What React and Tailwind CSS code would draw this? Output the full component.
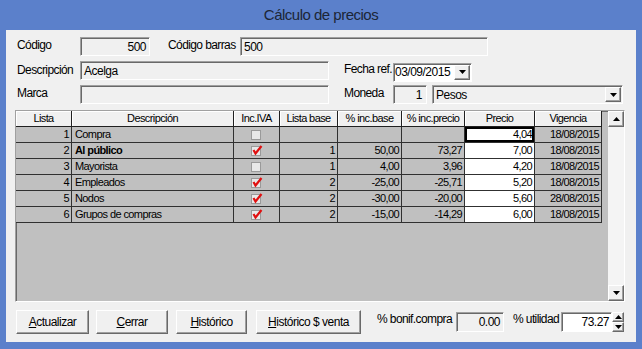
import React from 'react'

const FONT = "font-[family-name:'Liberation_Sans',Arial,sans-serif]"
const sunk = 'border border-t-[#a0a0a0] border-l-[#a0a0a0] border-b-white border-r-white shadow-[inset_1px_1px_0_#696969]'
const raised = 'border border-t-white border-l-white border-b-[#696969] border-r-[#696969] shadow-[inset_-1px_-1px_0_#a0a0a0]'

const cols = [
  { key: 'lista', label: 'Lista', w: 'w-[56px]', align: 'justify-end pr-[2px]' },
  { key: 'desc', label: 'Descripción', w: 'w-[162px]', align: 'justify-start pl-[3px]' },
  { key: 'iva', label: 'Inc.IVA', w: 'w-[46px]', align: 'justify-center' },
  { key: 'base', label: 'Lista base', w: 'w-[58px]', align: 'justify-end pr-[2px]' },
  { key: 'ib', label: '% inc.base', w: 'w-[64px]', align: 'justify-end pr-[2px]' },
  { key: 'ip', label: '% inc.precio', w: 'w-[63px]', align: 'justify-end pr-[2px]' },
  { key: 'precio', label: 'Precio', w: 'w-[70px]', align: 'justify-end pr-[2px]' },
  { key: 'vig', label: 'Vigencia', w: 'w-[67px]', align: 'justify-end pr-[2px]' },
]

const rows = [
  { lista: 1, desc: 'Compra', iva: false, base: '', ib: '', ip: '', precio: '4,04', vig: '18/08/2015' },
  { lista: 2, desc: 'Al público', bold: true, iva: true, base: '1', ib: '50,00', ip: '73,27', precio: '7,00', vig: '18/08/2015' },
  { lista: 3, desc: 'Mayorista', iva: false, base: '1', ib: '4,00', ip: '3,96', precio: '4,20', vig: '18/08/2015' },
  { lista: 4, desc: 'Empleados', iva: true, base: '2', ib: '-25,00', ip: '-25,71', precio: '5,20', vig: '18/08/2015' },
  { lista: 5, desc: 'Nodos', iva: true, base: '2', ib: '-30,00', ip: '-20,00', precio: '5,60', vig: '28/08/2015' },
  { lista: 6, desc: 'Grupos de compras', iva: true, base: '2', ib: '-15,00', ip: '-14,29', precio: '6,00', vig: '18/08/2015' },
]

function Check({ on }) {
  return (
    <svg width="12" height="11" viewBox="0 0 12 11">
      <rect x="0.5" y="1.5" width="9" height="9" fill="#e8e8e8" stroke="#9a9a9a" />
      {on && <path d="M2.5 5 L4.5 8.5 L10.5 1" fill="none" stroke="#e01010" strokeWidth="2.2" />}
    </svg>
  )
}

function Arrow({ up }) {
  return (
    <svg width="7" height="4" viewBox="0 0 7 4">
      <path d={up ? 'M0 4 L7 4 L3.5 0 Z' : 'M0 0 L7 0 L3.5 4 Z'} fill="#000" />
    </svg>
  )
}

function Label({ children, className = '' }) {
  return <div className={`text-[12px] tracking-[-0.6px] leading-none whitespace-nowrap ${className}`}>{children}</div>
}

function Button({ children, className = '' }) {
  return (
    <div className={`h-[24px] ${raised} bg-[#f0f0f0] flex items-center justify-center text-[12px] tracking-[-0.5px] whitespace-nowrap ${className}`}>
      {children}
    </div>
  )
}

const val = 'text-[12px] tracking-[-0.5px] whitespace-nowrap'

export default function App() {
  return (
    <div className={`w-[642px] h-[349px] bg-[#5b80cb] flex flex-col text-black ${FONT}`}>
      <div className="h-[30px] flex items-center justify-center text-[15px] tracking-[-0.5px] text-[#1c2636]">Cálculo de precios</div>

      <div className="mx-[6px] h-[312px] bg-[#f0f0f0] pl-[9px] pt-[7px]">
        {/* header fields */}
        <div className="pl-[2px] flex items-center h-[19px]">
          <Label className="w-[63px] -mt-[3px]">Código</Label>
          <div className={`w-[70px] h-full ${sunk} flex items-center justify-end pr-[3px] ${val}`}>500</div>
          <Label className="ml-[18px] w-[72px] -mt-[4px]">Código barras</Label>
          <div className={`w-[248px] h-full ${sunk} flex items-center pl-[3px] ${val}`}>500</div>
        </div>

        <div className="pl-[2px] flex items-center h-[19px] mt-[5px]">
          <Label className="w-[63px] -mt-[2px]">Descripción</Label>
          <div className={`w-[249px] h-full ${sunk} flex items-center pl-[3px] ${val}`}>Acelga</div>
          <Label className="ml-[15px] w-[49px] -mt-[3px]">Fecha ref.</Label>
          <div className={`w-[79px] h-[19px] mt-[3px] ${sunk} bg-white flex items-center ${val}`}>
            <span className="flex-1 pl-[1px]">03/09/2015</span>
            <div className={`w-[16px] h-[15px] mr-[1px] ${raised} bg-[#f0f0f0] flex items-center justify-center`}>
              <Arrow />
            </div>
          </div>
        </div>

        <div className="pl-[2px] flex items-center h-[19px] mt-[5px]">
          <Label className="w-[63px] -mt-[3px]">Marca</Label>
          <div className={`w-[249px] h-full ${sunk}`} />
          <Label className="ml-[15px] w-[49px] -mt-[3px]">Moneda</Label>
          <div className={`w-[34px] h-full ${sunk} flex items-center justify-end pr-[4px] ${val}`}>1</div>
          <div className={`ml-[5px] w-[191px] h-full ${sunk} flex items-center ${val}`}>
            <span className="flex-1 pl-[3px]">Pesos</span>
            <div className={`w-[16px] h-[15px] mr-[1px] ${raised} bg-[#f0f0f0] flex items-center justify-center`}>
              <Arrow />
            </div>
          </div>
        </div>

        {/* grid */}
        <div className={`mt-[6px] w-[610px] h-[192px] ${sunk} bg-[#c0c0c0] flex`}>
          <div className="w-[586px] flex flex-col text-[11px] tracking-[-0.6px] whitespace-nowrap">
            <div className="flex h-[16px]">
              {cols.map(c => (
                <div
                  key={c.key}
                  className={`${c.w} h-full bg-[#f0f0f0] border-r border-b border-r-[#202020] border-b-[#202020] shadow-[inset_1px_1px_0_#fff] flex items-center justify-center`}
                >
                  {c.label}
                </div>
              ))}
            </div>
            {rows.map((r, i) => (
              <div key={r.lista} className="flex h-[16px]">
                {cols.map(c => {
                  const isPrecio = c.key === 'precio'
                  const focus = isPrecio && i === 0
                  return (
                    <div
                      key={c.key}
                      className={`${c.w} h-full border-r border-b border-[#303030] flex items-center ${c.align} ${
                        isPrecio ? 'bg-white' : 'bg-[#c0c0c0]'
                      } ${focus ? 'shadow-[inset_0_0_0_2px_#000]' : ''} ${c.key === 'desc' && r.bold ? 'font-bold' : ''}`}
                    >
                      {c.key === 'iva' ? <Check on={r.iva} /> : r[c.key]}
                    </div>
                  )
                })}
              </div>
            ))}
          </div>
          <div className="w-[6px]" />
          <div className="w-[16px] h-full bg-[#f4f4f4] flex flex-col justify-between">
            <div className={`h-[16px] ${raised} bg-[#f0f0f0] flex items-center justify-center`}>
              <Arrow up />
            </div>
            <div className={`h-[16px] ${raised} bg-[#f0f0f0] flex items-center justify-center`}>
              <Arrow />
            </div>
          </div>
        </div>

        {/* bottom bar */}
        <div className="mt-[8px] flex items-center h-[24px] pl-[1px]">
          <Button className="w-[73px]"><span><u>A</u>ctualizar</span></Button>
          <Button className="ml-[7px] w-[72px]"><span><u>C</u>errar</span></Button>
          <Button className="ml-[8px] w-[71px]"><span><u>H</u>istórico</span></Button>
          <Button className="ml-[9px] w-[105px]"><span><u>H</u>istórico $ venta</span></Button>
          <Label className="ml-[16px] w-[79px] -mt-[6px]">% bonif.compra</Label>
          <div className={`w-[48px] h-[20px] ${sunk} flex items-center justify-end pr-[3px] ${val}`}>0.00</div>
          <Label className="ml-[9px] w-[48px] -mt-[6px]">% utilidad</Label>
          <div className={`w-[51px] h-[20px] ${sunk} bg-white flex items-center justify-end pr-[2px] ${val}`}>73.27</div>
          <div className="w-[12px] h-[20px] flex flex-col">
            <div className={`flex-1 ${raised} bg-[#f0f0f0] flex items-center justify-center`}><Arrow up /></div>
            <div className={`flex-1 ${raised} bg-[#f0f0f0] flex items-center justify-center`}><Arrow /></div>
          </div>
        </div>
      </div>
    </div>
  )
}
